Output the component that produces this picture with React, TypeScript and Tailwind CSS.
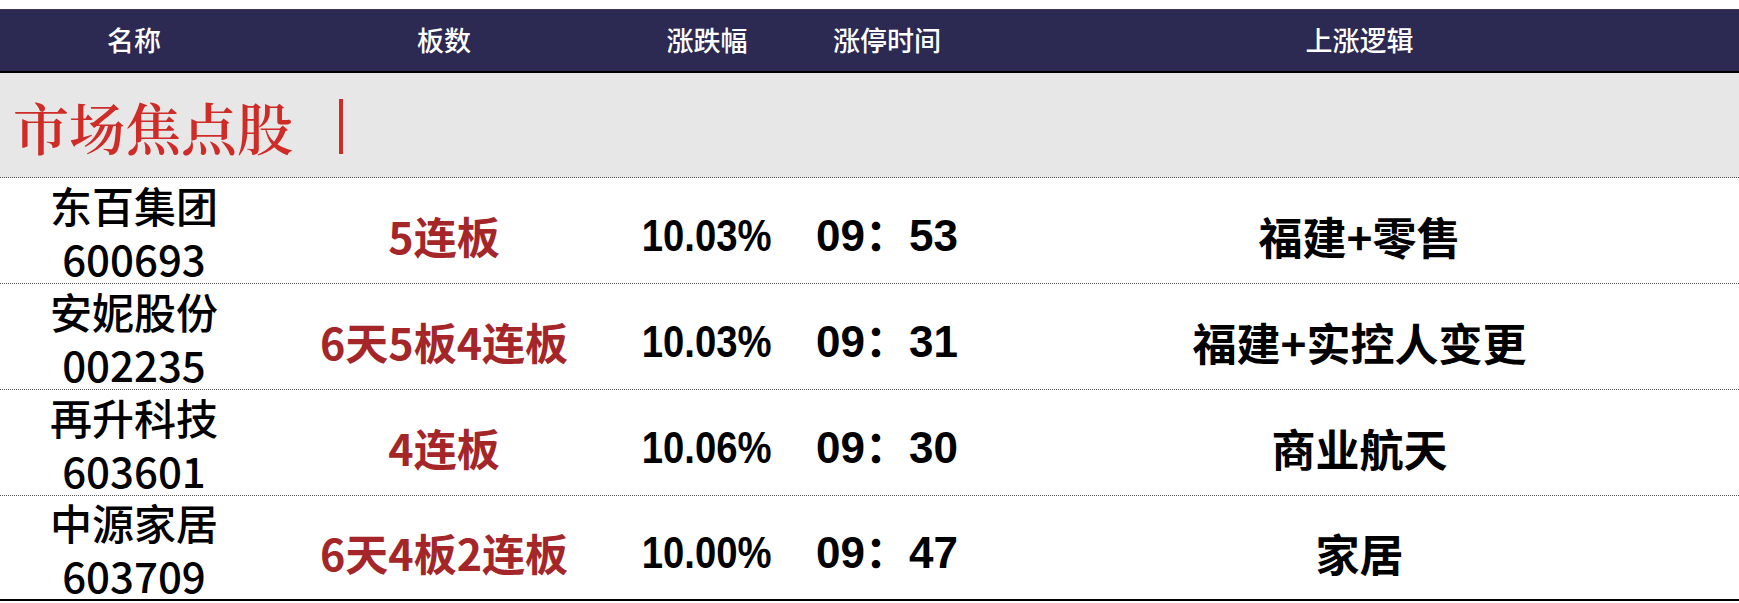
import React from "react";

const rows = [
  { name: "东百集团", code: "600693", boards: "5连板", pct: "10.03%", time: "09：53", logic: "福建+零售" },
  { name: "安妮股份", code: "002235", boards: "6天5板4连板", pct: "10.03%", time: "09：31", logic: "福建+实控人变更" },
  { name: "再升科技", code: "603601", boards: "4连板", pct: "10.06%", time: "09：30", logic: "商业航天" },
  { name: "中源家居", code: "603709", boards: "6天4板2连板", pct: "10.00%", time: "09：47", logic: "家居" },
];

const cols = "grid grid-cols-[268px_352px_174px_186px_1fr]";

export default function App() {
  return (
    <div
      className="w-[1739px] h-[603px] bg-white pt-[9px] overflow-hidden"
      style={{ fontFamily: '"Noto Sans CJK SC", "Noto Sans", sans-serif' }}
    >
      {/* header */}
      <div className={`${cols} h-[64px] bg-[#2c2a52] border-t border-[#3a3850] border-b-2 border-b-black items-center text-white text-[27px] font-medium`}>
        <div className="text-center">名称</div>
        <div className="text-center">板数</div>
        <div className="text-center">涨跌幅</div>
        <div className="text-center">涨停时间</div>
        <div className="text-center">上涨逻辑</div>
      </div>

      {/* section title */}
      <div className="h-[105px] bg-[#e7e7e7] border-b border-dotted border-[#555] flex items-center pl-[13px] pt-[2px]">
        <span
          className="text-[56px] leading-none font-semibold text-[#cf2c28]"
          style={{ fontFamily: '"Noto Serif CJK SC", "Source Han Serif SC", "AR PL UMing CN", "Noto Sans CJK SC", serif' }}
        >
          市场焦点股
        </span>
        <span className="ml-[46px] w-[4px] h-[55px] bg-[#cf2c28]" />
      </div>

      {/* rows */}
      {rows.map((r, i) => (
        <div
          key={r.code}
          className={`${cols} ${
            i === rows.length - 1
              ? "h-[105px] grid-rows-[103px] border-b-2 border-black"
              : "h-[106px] grid-rows-[105px] border-b border-dotted border-[#555]"
          }`}
        >
          <div className="flex flex-col justify-center pt-[1px] text-center text-[42px] leading-[53px] font-medium text-black">
            <div>{r.name}</div>
            <div>{r.code}</div>
          </div>
          <div className="flex items-center justify-center pt-[10px] text-[43px] font-bold text-[#a52629]">{r.boards}</div>
          <div className="flex items-center justify-center pt-[10px]">
            <span
              className="inline-block text-[44px] font-bold text-black scale-x-[0.87]"
              style={{ fontFamily: '"Liberation Sans", "Noto Sans CJK SC", sans-serif' }}
            >
              {r.pct}
            </span>
          </div>
          <div className="flex items-center justify-center pt-[10px]">
            <span
              className="inline-block text-[44px] font-bold text-black"
              style={{ fontFamily: '"Liberation Sans", "Noto Sans CJK SC", sans-serif' }}
            >
              {r.time}
            </span>
          </div>
          <div className="flex items-center justify-center pt-[10px] text-[44px] font-bold text-black">{r.logic}</div>
        </div>
      ))}
    </div>
  );
}
